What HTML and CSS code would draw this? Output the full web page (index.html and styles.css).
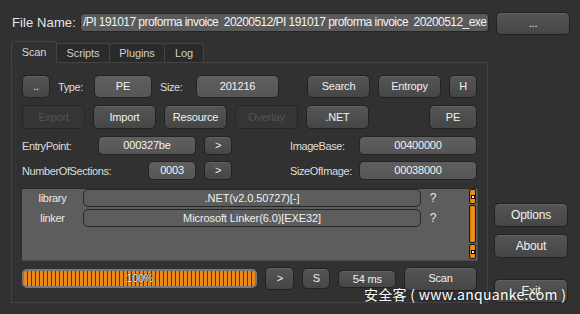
FILE: index.html
```html
<!DOCTYPE html>
<html>
  <head>
    <title>Detect It Easy</title>
    <link rel="stylesheet" href="styles.css">
  </head>
  <body>
    <div class="window">
      <div class="file-row">
        <span class="file-label">File Name:</span>
        <div class="file-input"><span>/PI 191017 proforma invoice&nbsp; 20200512/PI 191017 proforma invoice&nbsp; 20200512_exe</span></div>
        <button class="btn browse">...</button>
      </div>

      <div class="main">
        <div class="left">
          <div class="tabs">
            <div class="tab active t-scan">Scan</div>
            <div class="tab t-scripts">Scripts</div>
            <div class="tab t-plugins">Plugins</div>
            <div class="tab t-log">Log</div>
          </div>

          <div class="panel">
            <div class="row row-type">
              <button class="btn w28">..</button>
              <span class="lbl w28">Type:</span>
              <div class="value w58">PE</div>
              <span class="lbl w28">Size:</span>
              <div class="value w83">201216</div>
              <button class="btn w63 ml20">Search</button>
              <button class="btn w63">Entropy</button>
              <button class="btn w28">H</button>
            </div>

            <div class="row row-tools">
              <button class="btn w63" disabled>Export</button>
              <button class="btn w63">Import</button>
              <button class="btn w63">Resource</button>
              <button class="btn w63" disabled>Overlay</button>
              <button class="btn w63">.NET</button>
              <button class="btn w48 push">PE</button>
            </div>

            <div class="row row-info">
              <span class="lbl w68">EntryPoint:</span>
              <div class="value w98">000327be</div>
              <button class="btn w28">&gt;</button>
              <span class="lbl w61 ml50">ImageBase:</span>
              <div class="value w118">00400000</div>
            </div>

            <div class="row row-info">
              <span class="lbl w118">NumberOfSections:</span>
              <div class="value w48">0003</div>
              <button class="btn w28">&gt;</button>
              <span class="lbl w61 ml50">SizeOfImage:</span>
              <div class="value w118">00038000</div>
            </div>

            <div class="result">
              <div class="result-list">
                <div class="result-row">
                  <span class="r-type">library</span>
                  <div class="r-name">.NET(v2.0.50727)[-]</div>
                  <span class="r-info">?</span>
                </div>
                <div class="result-row">
                  <span class="r-type">linker</span>
                  <div class="r-name">Microsoft Linker(6.0)[EXE32]</div>
                  <span class="r-info">?</span>
                </div>
              </div>
              <div class="scrollbar">
                <div class="sb-arrow"><i></i></div>
                <div class="sb-thumb"></div>
                <div class="sb-arrow"><i></i></div>
              </div>
            </div>

            <div class="row row-scan">
              <div class="progress"><span>100%</span></div>
              <button class="btn w29">&gt;</button>
              <button class="btn w28 short">S</button>
              <div class="btn time w58">54 ms</div>
              <button class="btn w73 tall">Scan</button>
            </div>
          </div>
        </div>

        <div class="side">
          <button class="btn side-btn">Options</button>
          <button class="btn side-btn">About</button>
          <button class="btn side-btn exit">Exit</button>
        </div>
      </div>

      <div class="watermark">安全客 ( www.anquanke.com )</div>
    </div>
  </body>
</html>
```

FILE: styles.css
```css
body {
  margin: 0;
  background-color: #313131;
  font-family: "Liberation Sans", Arial, sans-serif;
  font-size: 11px;
  color: #dedede;
}

.window {
  position: relative;
  width: 580px;
  height: 314px;
  overflow: hidden;
}

/* file name row */
.file-row {
  display: flex;
  align-items: flex-start;
  padding: 12px 0 0 12px;
  height: 21px;
}

.file-label {
  width: 68px;
  font-size: 13px;
  line-height: 21px;
  color: #e6e6e6;
  letter-spacing: 0.1px;
}

.file-input {
  width: 403px;
  height: 17px;
  margin-top: 1px;
  padding: 0 2px;
  background-color: #5a5a5a;
  border: 1px solid #262626;
  border-radius: 4px;
  overflow: hidden;
  white-space: nowrap;
  font-size: 12px;
  line-height: 17px;
  color: #f2f2f2;
  letter-spacing: -0.55px;
}

.browse {
  width: 74px;
  height: 21px;
  margin-left: 7px;
}

/* buttons and value boxes */
.btn {
  height: 23px;
  padding: 0;
  font-family: inherit;
  font-size: 11px;
  color: #f0f0f0;
  letter-spacing: -0.2px;
  background: linear-gradient(#555555, #464646);
  border: 1px solid #222222;
  border-radius: 5px;
  box-shadow: inset 0 1px 0 rgba(255, 255, 255, 0.07);
  text-align: center;
  line-height: 21px;
}

.btn:disabled {
  background: #353535;
  border-color: #262626;
  color: #545454;
  box-shadow: none;
}

.value {
  height: 21px;
  background: linear-gradient(#5f5f5f, #555555);
  border: 1px solid #242424;
  border-radius: 5px;
  color: #f2f2f2;
  text-align: center;
  line-height: 19px;
  letter-spacing: -0.2px;
  box-sizing: border-box;
}

.row-type .value { height: 23px; line-height: 21px; }

.lbl {
  color: #dedede;
  letter-spacing: -0.4px;
  white-space: nowrap;
}

.w28 { width: 28px; }
.w29 { width: 29px; }
.w48 { width: 48px; }
.w58 { width: 58px; }
.w61 { width: 61px; }
.w63 { width: 63px; }
.w68 { width: 68px; }
.w73 { width: 73px; }
.w83 { width: 83px; }
.w98 { width: 98px; }
.w118 { width: 118px; }
.ml20 { margin-left: 20px; }
.ml50 { margin-left: 50px; }
.push { margin-left: auto; }

/* main area */
.main {
  display: flex;
  margin-top: 8px;
}

.left {
  width: 477px;
  margin-left: 11px;
}

.tabs {
  display: flex;
  align-items: flex-end;
  height: 21px;
  position: relative;
  z-index: 1;
}

.tab {
  box-sizing: border-box;
  height: 19px;
  background-color: #2a2a2a;
  border: 1px solid #444444;
  border-bottom: none;
  border-left: none;
  border-radius: 3px 3px 0 0;
  text-align: center;
  line-height: 18px;
  font-size: 11px;
  color: #cfcfcf;
  letter-spacing: -0.1px;
}

.tab.active {
  height: 22px;
  margin-bottom: -1px;
  background-color: #313131;
  border-left: 1px solid #444444;
  line-height: 20px;
  color: #d8d8d8;
}

.t-scan { width: 46px; }
.t-scripts { width: 53px; }
.t-plugins { width: 55px; }
.t-log { width: 39px; }

.panel {
  height: 227px;
  padding: 12px 10px 0 10px;
  border: 1px solid #434343;
}

.row {
  display: flex;
  align-items: center;
  gap: 8px;
}

.row-type { height: 23px; }
.row-tools { height: 24px; margin-top: 7px; }
.row-tools .btn { height: 24px; }
.row-info { height: 19px; margin-top: 7px; }
.row-info + .row-info { margin-top: 6px; }
.row-info .value,
.row-info .btn { height: 19px; line-height: 17px; }

/* scan result list */
.result {
  display: flex;
  height: 71px;
  margin: 8px -1px 0 -1px;
  background-color: #5d5d5d;
  border: 1px solid #2a2a2a;
  border-bottom-color: #4a4a4a;
  border-right-color: #4a4a4a;
}

.result-list {
  flex: 1;
}

.result-row {
  display: flex;
  align-items: center;
  height: 18px;
  margin-bottom: 2px;
}

.r-type {
  width: 61px;
  text-align: center;
  color: #e8e8e8;
  letter-spacing: -0.3px;
}

.r-name {
  width: 336px;
  height: 16px;
  border: 1px solid #262626;
  border-radius: 5px;
  text-align: center;
  line-height: 16px;
  color: #f0f0f0;
  letter-spacing: -0.1px;
}

.r-info {
  width: 24px;
  text-align: center;
  font-size: 12px;
  color: #e8e8e8;
}

.scrollbar {
  display: flex;
  flex-direction: column;
  width: 7px;
  margin-right: 1px;
  gap: 1px;
}

.sb-arrow,
.sb-thumb {
  background: linear-gradient(90deg, #c46d10, #f3941f 40%, #e58516);
  border: 1px solid #1b1b1b;
  border-radius: 2px;
}

.sb-arrow {
  display: flex;
  align-items: center;
  justify-content: center;
  height: 13px;
}

.sb-arrow i {
  width: 2px;
  height: 2px;
  border: 1px solid #000000;
  background-color: #ffffff;
}

.sb-thumb {
  height: 36px;
}

/* scan row */
.row-scan {
  height: 23px;
  margin-top: 6px;
}

.progress {
  width: 232px;
  height: 15px;
  border: 2px solid #787878;
  border-radius: 5px;
  background: repeating-linear-gradient(90deg, #e8891c 0, #e8891c 2.6px, #3c3c3c 2.6px, #3c3c3c 4px);
  text-align: center;
  line-height: 15px;
  color: #ffffff;
  letter-spacing: -0.3px;
  text-shadow: 0 0 1px #000, 0 0 1px #000;
}

.short { height: 21px; line-height: 19px; }
.time {
  height: 18px;
  line-height: 16px;
  box-sizing: border-box;
}
.tall { height: 24px; }

/* right column */
.side {
  display: flex;
  flex-direction: column;
  width: 74px;
  margin-left: 6px;
  padding-top: 162px;
  gap: 7px;
}

.side-btn {
  width: 74px;
  height: 24px;
  font-size: 12px;
}

.exit {
  margin-top: 14px;
}

/* watermark overlay */
.watermark {
  position: absolute;
  left: 364px;
  top: 284px;
  font-family: "Noto Sans CJK SC", "Noto Sans", sans-serif;
  font-size: 14px;
  line-height: 20px;
  letter-spacing: 0.3px;
  color: #ffffff;
  white-space: nowrap;
  text-shadow: 0 0 2px rgba(0, 0, 0, 0.6);
}
```
